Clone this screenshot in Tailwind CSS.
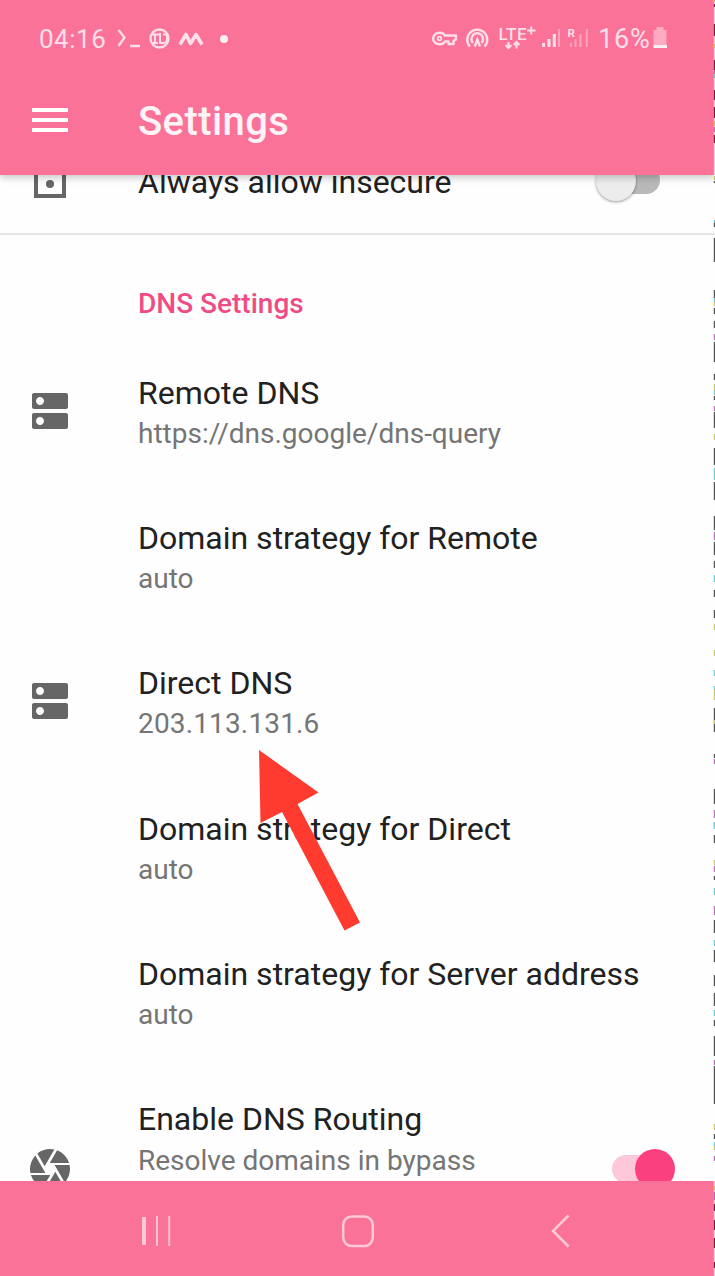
<!DOCTYPE html>
<html lang="en">
<head>
<meta charset="utf-8">
<title>Settings</title>
<script src="https://cdn.jsdelivr.net/npm/@tailwindcss/browser@4"></script>
</head>
<body class="bg-[#fefefe]" style="font-family: Roboto, sans-serif">
<div class="relative flex h-[1276px] w-[715px] flex-col overflow-hidden bg-[#fefefe]">

  <header class="relative z-10 h-[175px] shrink-0 bg-[#fb7299] text-white shadow-[0_2px_8px_rgba(0,0,0,0.25)]">
    <div class="flex h-[76px] items-center pl-[39px] text-[#ffdfe9]">
      <span class="w-[68px] pt-[1px] text-[26px] leading-[30px] tracking-[0.5px] whitespace-nowrap">04:16</span>
      <svg class="ml-[8px] h-[28px] w-[120px] shrink-0" viewBox="115 24 120 28" fill="none" stroke="#ffdfe9" stroke-width="2.3">
        <path d="M118.500 30L124.500 37.500L118.500 46M130 46H140"/>
        <circle cx="159.500" cy="38.500" r="9"/>
        <path d="M152 34.500H159M155 34V43M152 43H158M160 33V43H163M163 34.500H167V39Q167 43 163 43" stroke-width="2"/>
        <path d="M180 44.500L186 34.500L190.500 43.500L196 34.500L202 44.500" stroke-width="3.600" stroke-linejoin="round"/>
        <circle cx="224" cy="39" r="4" fill="#ffeef3" stroke="none"/>
      </svg>
      <svg class="ml-[195px] h-[32px] w-[162px] shrink-0" viewBox="430 22 162 32" fill="none" stroke="#ffdfe9" stroke-width="2.4">
        <path d="M445 35.500C442 31 434 32 433 38.500C434 45 442 46 445 41.500H448.500V44H453.500V41L456 39.500V35.500Z" stroke-linejoin="round"/>
        <circle cx="439.500" cy="38.500" r="1.800" stroke-width="1.800"/>
        <path d="M470 46.500A10 10 0 1 1 484.500 46.500M473 43A5.800 5.800 0 1 1 481.500 43M474.800 46.500L477.300 39.500L480 46.500" />
        <path d="M508.500 42V48M505.500 45L508.500 48L511.500 45M516.500 48.500V42.500M513.500 45L516.500 42L519.500 45" stroke-width="2"/>
        <path d="M527 30.500H535.500M531.200 26.500V34.500" stroke-width="2"/>
        <path d="M543.500 47V43M549 47V39M554.300 47V34" stroke-width="3"/>
        <path d="M559 47V29M571 47V43M575.500 47V39M580.500 47V34M586.800 47V29" stroke-width="2" opacity=".45"/>
        <text x="498.500" y="39.500" fill="#ffdfe9" stroke="none" font-size="17" font-weight="500" textLength="28">LTE</text>
        <text x="567.500" y="37" fill="#ffdfe9" stroke="none" font-size="11.500" font-weight="700">R</text>
      </svg>
      <span class="ml-[6px] w-[54px] pt-[1px] text-[27px] leading-[30px] tracking-[0.8px] whitespace-nowrap">16%</span>
      <svg class="h-[24px] w-[16px] shrink-0" viewBox="653 26 16 24"><path d="M657.500 27H664.500V30H667.500V46H654.500V30H657.500Z" fill="#fdaac2"/><path d="M654.500 45H668V48H654.500Z" fill="#fff0f5"/></svg>
    </div>
    <div class="flex h-[88px] items-center pl-[32px]">
      <div class="-mt-[1px] flex w-[106px] flex-col gap-[6px]">
        <div class="h-1 w-9 bg-white"></div>
        <div class="h-1 w-9 bg-white"></div>
        <div class="h-1 w-9 bg-white"></div>
      </div>
      <h1 class="pt-[3px] text-[40px] leading-[48px] font-medium tracking-[0.4px] text-[#fff3f7]">Settings</h1>
    </div>
  </header>

  <main class="min-h-0 flex-1 overflow-hidden text-[#212121]">
    <div class="-mt-[44px] flex h-[102px] items-center pl-[26px]">
      <svg class="-mt-[8px] mr-[64px] h-12 w-12" viewBox="0 0 24 24" fill="none" stroke="#666" stroke-width="2"><path d="M5 9H19V21H5ZM8 9V6A4 4 0 0 1 16 6V9"/><circle cx="12" cy="15" r="2" fill="#666" stroke="none"/></svg>
      <p class="w-[458px] text-[32px] leading-[38px] whitespace-nowrap">Always allow insecure</p>
      <div class="relative -mt-[5px] h-10 w-16">
        <div class="absolute top-[6px] right-0 h-[28px] w-[56px] rounded-full bg-[#b9b9b9]"></div>
        <div class="absolute top-[1px] left-0 size-10 rounded-full bg-[#ececec] shadow-[0_1px_3px_rgba(0,0,0,0.4)]"></div>
      </div>
    </div>
    <div class="h-[2px] bg-[#e4e4e4]"></div>

    <h2 class="h-[103px] pt-[52px] pl-[138px] text-[28px] leading-[33px] font-medium text-[#ef4c86]">DNS Settings</h2>

    <section class="flex h-[145.400px] items-center pl-[26px]">
      <svg class="mr-[64px] h-12 w-12" viewBox="0 0 24 24" fill="#666"><path d="M20 13H4c-.55 0-1 .45-1 1v6c0 .55.45 1 1 1h16c.55 0 1-.45 1-1v-6c0-.55-.45-1-1-1zM7 19c-1.100 0-2-.9-2-2s.9-2 2-2 2 .9 2 2-.9 2-2 2zM20 3H4c-.55 0-1 .45-1 1v6c0 .55.45 1 1 1h16c.55 0 1-.45 1-1V4c0-.55-.45-1-1-1zM7 9c-1.100 0-2-.9-2-2s.9-2 2-2 2 .9 2 2-.9 2-2 2z"/></svg>
      <div class="pt-[2px] whitespace-nowrap">
        <p class="text-[32px] leading-[38px]">Remote DNS</p>
        <p class="mt-[5px] text-[28px] leading-[33px] text-[#757575]">https://dns.google/dns-query</p>
      </div>
    </section>
    <section class="flex h-[145.400px] items-center pl-[138px]">
      <div class="pt-[2px] whitespace-nowrap">
        <p class="text-[32px] leading-[38px]">Domain strategy for Remote</p>
        <p class="mt-[5px] text-[28px] leading-[33px] text-[#757575]">auto</p>
      </div>
    </section>
    <section class="flex h-[145.400px] items-center pl-[26px]">
      <svg class="mr-[64px] h-12 w-12" viewBox="0 0 24 24" fill="#666"><path d="M20 13H4c-.55 0-1 .45-1 1v6c0 .55.45 1 1 1h16c.55 0 1-.45 1-1v-6c0-.55-.45-1-1-1zM7 19c-1.100 0-2-.9-2-2s.9-2 2-2 2 .9 2 2-.9 2-2 2zM20 3H4c-.55 0-1 .45-1 1v6c0 .55.45 1 1 1h16c.55 0 1-.45 1-1V4c0-.55-.45-1-1-1zM7 9c-1.100 0-2-.9-2-2s.9-2 2-2 2 .9 2 2-.9 2-2 2z"/></svg>
      <div class="pt-[2px] whitespace-nowrap">
        <p class="text-[32px] leading-[38px]">Direct DNS</p>
        <p class="mt-[5px] text-[28px] leading-[33px] tracking-[0.15px] text-[#757575]">203.113.131.6</p>
      </div>
    </section>
    <section class="flex h-[145.400px] items-center pl-[138px]">
      <div class="pt-[2px] whitespace-nowrap">
        <p class="text-[32px] leading-[38px]">Domain strategy for Direct</p>
        <p class="mt-[5px] text-[28px] leading-[33px] text-[#757575]">auto</p>
      </div>
    </section>
    <section class="flex h-[145.400px] items-center pl-[138px]">
      <div class="pt-[2px] whitespace-nowrap">
        <p class="text-[32px] leading-[38px]">Domain strategy for Server address</p>
        <p class="mt-[5px] text-[28px] leading-[33px] text-[#757575]">auto</p>
      </div>
    </section>
    <section class="flex items-start pt-[35px] pl-[26px]">
      <svg class="mt-[45px] mr-[64px] h-12 w-12" viewBox="0 0 24 24" fill="#666"><path d="M9.400 10.500l4.770-8.260C13.470 2.090 12.750 2 12 2c-2.400 0-4.600.85-6.320 2.250l3.660 6.350.06-.1zM21.540 9c-.92-2.920-3.150-5.260-6-6.340L11.880 9h9.660zm.26 1h-7.490l.29.5 4.760 8.250C21 16.970 22 14.610 22 12c0-.69-.07-1.350-.2-2zM8.540 12l-3.900-6.750C3.010 7.030 2 9.390 2 12c0 .69.07 1.350.2 2h7.490l-1.150-2zm-6.080 3c.92 2.920 3.150 5.260 6 6.340L12.120 15H2.460zm11.270 0l-3.900 6.760c.7.150 1.420.24 2.170.24 2.400 0 4.600-.85 6.320-2.250l-3.660-6.350-.93 1.600z"/></svg>
      <div class="w-[473px] whitespace-nowrap">
        <p class="text-[32px] leading-[38px]">Enable DNS Routing</p>
        <p class="mt-[6px] text-[28px] leading-[33px] text-[#757575]">Resolve domains in bypass</p>
      </div>
      <div class="relative mt-[49px] h-10 w-16">
        <div class="absolute top-[6px] left-px h-[28px] w-[56px] rounded-full bg-[#fec8da]"></div>
        <div class="absolute top-0 right-0 size-10 rounded-full bg-[#fb4080]"></div>
      </div>
    </section>
  </main>

  <nav class="flex h-[95px] shrink-0 items-center bg-[#fb7299] pt-[5px] pl-[140px]">
    <svg class="h-[34px] w-[34px]" viewBox="140 1214 34 34"><path d="M142 1217H146V1245H142Z" fill="#ffc9d9"/><path d="M156 1216H158V1246H156ZM168.200 1216H170.200V1246H168.200Z" fill="#ffc3d5"/></svg>
    <svg class="ml-[166px] h-[36px] w-[36px]" viewBox="340 1213 36 36" fill="none" stroke="#ffc9d9" stroke-width="2.500"><rect x="343.200" y="1216.500" width="29.600" height="29.500" rx="8.500"/></svg>
    <svg class="ml-[172px] h-[36px] w-[26px]" viewBox="548 1213 26 36" fill="none" stroke="#ffc9d9" stroke-width="2.500"><path d="M568.500 1215.500L553 1231L568.500 1246.500"/></svg>
  </nav>

  <!-- pointer arrow over the list -->
  <svg class="absolute top-[745px] left-[250px] z-20 h-[190px] w-[120px]" viewBox="250 745 120 190"><path d="M259 750L318.500 792.500L297.500 804L360 922.500L344.500 930.500L282 812L260.500 823Z" fill="#ff3b30"/></svg>

  <!-- speckled strip along the right edge -->
  <svg class="absolute top-0 right-0 z-20 h-[1276px] w-[2px] opacity-90" viewBox="0 0 2 1276" fill="none">
    <path d="M1.400 0V175" stroke="#fbd4df" stroke-width="1.200"/>
    <path d="M1.400 1181V1276" stroke="#fbd4df" stroke-width="1.200"/>
    <path d="M1.400 4V7M1.400 24V36M1.400 60V70M1.400 90V100M1.400 107V118M1.400 135V143M1.400 1204V1211M1.400 1220V1230M1.400 1238V1248M1.400 1262V1268" stroke="#631637" stroke-width="1.200"/>
    <path d="M1.400 181V183M1.400 223V227M1.400 238V262M1.400 290V298M1.400 308V314M1.400 321V328M1.400 342V362M1.400 374V380M1.400 396V400M1.400 412V428M1.400 448V465M1.400 482V500M1.400 516V530M1.400 542V555M1.400 561V568M1.400 590V597M1.400 610V618M1.400 708V732M1.400 754V758M1.400 789V804M1.400 822V827M1.400 835V843M1.400 876V880M1.400 920V933M1.400 950V962M1.400 975V986M1.400 993V1006M1.400 1020V1026M1.400 1036V1056M1.400 1066V1104M1.400 1134V1139" stroke="#414141" stroke-width="1.200"/>
    <path d="M1.400 0V2M1.400 44V48M1.400 121V126M1.400 176V180M1.400 302V306M1.400 384V390M1.400 434V440M1.400 624V630M1.400 650V656M1.400 690V700M1.400 720V724M1.400 860V865M1.400 1124V1130M1.400 1146V1150M1.400 1186V1190" stroke="#c7c65b" stroke-width="1.200"/>
    <path d="M1.400 74V78M1.400 220V223M1.400 298V302M1.400 390V395M1.400 468V480M1.400 575V582M1.400 670V676M1.400 686V690M1.400 822V829M1.400 888V895M1.400 940V946M1.400 1010V1016M1.400 1142V1146" stroke="#5fc8ce" stroke-width="1.200"/>
    <path d="M1.400 70V74M1.400 127V132M1.400 334V340M1.400 406V411M1.400 532V540M1.400 759V764M1.400 810V818M1.400 866V872M1.400 906V915M1.400 1060V1065M1.400 1156V1161M1.400 1192V1200" stroke="#b963b3" stroke-width="1.200"/>
  </svg>
</div>
</body>
</html>
